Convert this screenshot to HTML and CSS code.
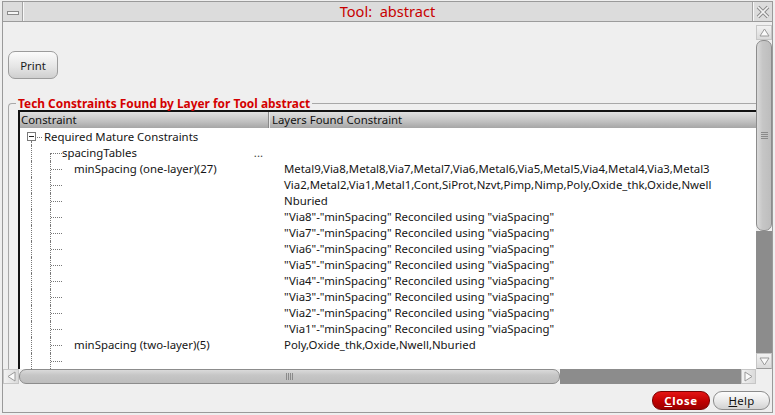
FILE: index.html
```html
<!DOCTYPE html>
<html>
<head>
<meta charset="utf-8">
<link rel="stylesheet" href="styles.css">
</head>
<body>
<div class="win">
  <div class="titlebar">
    <div class="tb-btn tb-min"><span class="minbar"></span></div>
    <div class="title">Tool:&nbsp; abstract</div>
    <div class="tb-btn tb-close">
      <svg width="14" height="14" viewBox="0 0 14 14"><path d="M2 2 L12 12 M12 2 L2 12" stroke="#8a8a8a" stroke-width="3.6" fill="none"/><path d="M2 2 L12 12 M12 2 L2 12" stroke="#f2f2f2" stroke-width="1.6" fill="none"/></svg>
    </div>
  </div>
  <div class="mid">
    <div class="view">
      <button class="print">Print</button>
      <div class="group">
        <div class="legend">Tech Constraints Found by Layer for Tool abstract</div>
        <div class="table">
          <div class="thead">
            <div class="th th1">Constraint</div>
            <div class="th th2">Layers Found Constraint</div>
          </div>
          <div class="tbody">
            <div class="row">
              <div class="c1"><span class="exp"><span class="box"></span><span class="exp-line"></span></span><span class="hd"></span><span class="lbl0">Required Mature Constraints</span></div>
              <div class="c2"></div>
            </div>
            <div class="row">
              <div class="c1"><span class="v1"></span><span class="conn half"><span class="t"></span><span class="b"></span></span><span class="lbl">spacingTables</span><span class="ell">...</span></div>
              <div class="c2"></div>
            </div>
            <div class="row">
              <div class="c1"><span class="v1"></span><span class="conn full"><span class="t"></span></span><span class="lbl l3">minSpacing (one-layer)(27)</span></div>
              <div class="c2">Metal9,Via8,Metal8,Via7,Metal7,Via6,Metal6,Via5,Metal5,Via4,Metal4,Via3,Metal3</div>
            </div>
            <div class="row">
              <div class="c1"><span class="v1"></span><span class="conn full"><span class="t"></span></span></div>
              <div class="c2">Via2,Metal2,Via1,Metal1,Cont,SiProt,Nzvt,Pimp,Nimp,Poly,Oxide_thk,Oxide,Nwell</div>
            </div>
            <div class="row">
              <div class="c1"><span class="v1"></span><span class="conn full"><span class="t"></span></span></div>
              <div class="c2">Nburied</div>
            </div>
            <div class="row">
              <div class="c1"><span class="v1"></span><span class="conn full"><span class="t"></span></span></div>
              <div class="c2">"Via8"-"minSpacing" Reconciled using "viaSpacing"</div>
            </div>
            <div class="row">
              <div class="c1"><span class="v1"></span><span class="conn full"><span class="t"></span></span></div>
              <div class="c2">"Via7"-"minSpacing" Reconciled using "viaSpacing"</div>
            </div>
            <div class="row">
              <div class="c1"><span class="v1"></span><span class="conn full"><span class="t"></span></span></div>
              <div class="c2">"Via6"-"minSpacing" Reconciled using "viaSpacing"</div>
            </div>
            <div class="row">
              <div class="c1"><span class="v1"></span><span class="conn full"><span class="t"></span></span></div>
              <div class="c2">"Via5"-"minSpacing" Reconciled using "viaSpacing"</div>
            </div>
            <div class="row">
              <div class="c1"><span class="v1"></span><span class="conn full"><span class="t"></span></span></div>
              <div class="c2">"Via4"-"minSpacing" Reconciled using "viaSpacing"</div>
            </div>
            <div class="row">
              <div class="c1"><span class="v1"></span><span class="conn full"><span class="t"></span></span></div>
              <div class="c2">"Via3"-"minSpacing" Reconciled using "viaSpacing"</div>
            </div>
            <div class="row">
              <div class="c1"><span class="v1"></span><span class="conn full"><span class="t"></span></span></div>
              <div class="c2">"Via2"-"minSpacing" Reconciled using "viaSpacing"</div>
            </div>
            <div class="row">
              <div class="c1"><span class="v1"></span><span class="conn full"><span class="t"></span></span></div>
              <div class="c2">"Via1"-"minSpacing" Reconciled using "viaSpacing"</div>
            </div>
            <div class="row">
              <div class="c1"><span class="v1"></span><span class="conn full"><span class="t"></span></span><span class="lbl l3">minSpacing (two-layer)(5)</span></div>
              <div class="c2">Poly,Oxide_thk,Oxide,Nwell,Nburied</div>
            </div>
            <div class="row">
              <div class="c1"><span class="v1"></span><span class="conn full"><span class="t"></span></span></div>
              <div class="c2"></div>
            </div>
          </div>
        </div>
      </div>
    </div>
    <div class="vscroll">
      <div class="arrow">
        <svg width="11" height="9" viewBox="0 0 11 9"><path d="M5.5 1 L10 8 L1 8 Z" fill="#fafafa" stroke="#9a9a9a" stroke-width="1"/></svg>
      </div>
      <div class="vthumb">
        <div class="grip-v"><i></i><i></i><i></i><i></i></div>
      </div>
      <div class="track"></div>
      <div class="arrow arrow-down">
        <svg width="11" height="9" viewBox="0 0 11 9"><path d="M5.5 8 L10 1 L1 1 Z" fill="#fafafa" stroke="#9a9a9a" stroke-width="1"/></svg>
      </div>
    </div>
  </div>
  <div class="hrow">
    <div class="hscroll">
      <div class="harrow">
        <svg width="9" height="11" viewBox="0 0 9 11"><path d="M1 5.5 L8 1 L8 10 Z" fill="#fafafa" stroke="#9a9a9a" stroke-width="1"/></svg>
      </div>
      <div class="hthumb">
        <div class="grip-h"><i></i><i></i><i></i><i></i></div>
      </div>
      <div class="track"></div>
      <div class="harrow">
        <svg width="9" height="11" viewBox="0 0 9 11"><path d="M8 5.5 L1 1 L1 10 Z" fill="#fafafa" stroke="#9a9a9a" stroke-width="1"/></svg>
      </div>
    </div>
    <div class="corner"></div>
  </div>
  <div class="footer">
    <button class="btn btn-close"><u>C</u>lose</button>
    <button class="btn btn-help"><u>H</u>elp</button>
  </div>
</div>
</body>
</html>
```

FILE: styles.css
```css
html, body {
  margin: 0;
  padding: 0;
}
body {
  background: #efefef;
  font-family: "Noto Sans", "DejaVu Sans", sans-serif;
  font-size: 11.4px;
  color: #151515;
  width: 775px;
  height: 415px;
  overflow: hidden;
}
.win {
  margin: 1px 2px 0 2px;
  border: 1px solid #9a9a9a;
  height: 410px;
  display: grid;
  grid-template-rows: 20px 347px 15px 28px;
  background: #efefef;
}

/* title bar */
.titlebar {
  display: flex;
  height: 19px;
  background: #dcdcdc;
  border-bottom: 1px solid #9c9c9c;
}
.tb-btn {
  width: 19px;
  display: flex;
  align-items: center;
  justify-content: center;
}
.tb-min {
  border-right: 1px solid #a4a4a4;
  box-shadow: 1px 0 0 #f8f8f8;
}
.minbar {
  display: block;
  width: 10px;
  height: 2px;
  margin-top: 3px;
  border: 1px solid #8a8a8a;
  background: #f6f6f6;
}
.tb-close {
  border-left: 1px solid #a4a4a4;
  box-shadow: inset 1px 0 0 #f8f8f8;
}
.title {
  flex: 1;
  text-align: center;
  color: #c80000;
  font-size: 14.6px;
  line-height: 19px;
}

/* middle */
.mid {
  display: grid;
  grid-template-columns: 753px 16px;
  overflow: hidden;
}
.view {
  overflow: hidden;
  padding: 29px 0 0 5px;
  box-sizing: border-box;
  height: 347px;
}
.print {
  display: block;
  width: 50px;
  height: 28px;
  margin: 0;
  padding: 0;
  border: 1px solid #9c9c9c;
  border-radius: 7px;
  background: linear-gradient(#fbfbfb, #e6e6e6 55%, #cfcfcf);
  font-family: inherit;
  font-size: 11.4px;
  color: #1a1a1a;
}
.group {
  margin-top: 24px;
  width: 900px;
  height: 400px;
  border-left: 1px solid #a8a8a8;
  border-top: 1px solid #a8a8a8;
  border-top-left-radius: 4px;
  padding-left: 9px;
  box-sizing: border-box;
}
.legend {
  width: max-content;
  margin: -8px 0 0 -2px;
  padding: 0 2px;
  height: 14px;
  line-height: 14px;
  background: #efefef;
  color: #d40000;
  font-weight: bold;
  font-size: 11.9px;
}
.table {
  border-left: 2px solid #111;
  border-top: 2px solid #111;
  background: #fff;
  height: 400px;
}
.thead {
  display: flex;
  height: 16px;
  line-height: 16px;
  background: linear-gradient(#e0e0e0, #c0c0c0 60%, #a6a6a6);
  color: #111;
}
.th1 {
  width: 247px;
  padding-left: 1px;
  border-right: 1px solid #888;
  box-shadow: 1px 0 0 #e8e8e8;
}
.th2 {
  padding-left: 3px;
}
.tbody {
  padding-top: 1px;
}
.row {
  display: grid;
  grid-template-columns: 248px auto;
  height: 16px;
  line-height: 16px;
  white-space: nowrap;
}
.c1 {
  display: flex;
  height: 16px;
}
.c2 {
  padding-left: 16px;
}
.exp {
  width: 9px;
  margin-left: 7px;
  display: flex;
  flex-direction: column;
  align-items: center;
}
.box {
  width: 9px;
  height: 9px;
  box-sizing: border-box;
  border: 1px solid #7a7a7a;
  margin-top: 3px;
  background: #fff;
  flex: none;
}
.box::after {
  content: "";
  display: block;
  height: 1px;
  margin: 3px 1px 0;
  background: #222;
}
.exp-line {
  flex: 1;
  width: 0;
  border-left: 1px dotted #777;
}
.hd {
  width: 5px;
  margin-left: 1px;
  height: 8px;
  border-bottom: 1px dotted #777;
}
.lbl0 {
  margin-left: 2px;
}
.v1 {
  width: 19px;
  margin-left: 11px;
  border-left: 1px dotted #777;
  box-sizing: border-box;
  flex: none;
}
.conn {
  width: 12px;
  display: flex;
  flex-direction: column;
  box-sizing: border-box;
  flex: none;
}
.conn.full {
  border-left: 1px dotted #777;
}
.conn .t {
  height: 9px;
  border-bottom: 1px dotted #777;
  box-sizing: border-box;
}
.conn .b {
  flex: 1;
  border-left: 1px dotted #777;
}
.lbl.l3 {
  padding-left: 12px;
}
.ell {
  margin-left: auto;
  margin-right: 5px;
  color: #444;
}

/* scrollbars */
.vscroll {
  display: flex;
  flex-direction: column;
  padding-top: 3px;
  box-sizing: border-box;
  height: 347px;
}
.arrow {
  height: 15px;
  flex: none;
  box-sizing: border-box;
  background: linear-gradient(#f2f2f2, #dadada);
  border: 1px solid #c6c6c6;
  display: flex;
  align-items: center;
  justify-content: center;
}
.arrow-down {
  height: 16px;
  border-bottom: 1px solid #9a9a9a;
}
.vthumb {
  height: 191px;
  flex: none;
  box-sizing: border-box;
  border: 1px solid #8c8c8c;
  border-radius: 7px;
  background: linear-gradient(90deg, #dadada, #c6c6c6 40%, #bdbdbd);
  display: flex;
  align-items: center;
  justify-content: center;
}
.grip-v {
  display: flex;
  flex-direction: column;
  gap: 1px;
}
.grip-v i {
  display: block;
  width: 7px;
  height: 1px;
  background: #8a8a8a;
}
.track {
  flex: 1;
  background: #8c8c8c;
}
.hrow {
  display: grid;
  grid-template-columns: 753px 16px;
}
.hscroll {
  display: flex;
  height: 15px;
}
.harrow {
  width: 15px;
  flex: none;
  box-sizing: border-box;
  background: linear-gradient(90deg, #f2f2f2, #dadada);
  border: 1px solid #c6c6c6;
  display: flex;
  align-items: center;
  justify-content: center;
}
.harrow:first-child {
  width: 16px;
}
.hthumb {
  width: 541px;
  flex: none;
  box-sizing: border-box;
  border: 1px solid #8c8c8c;
  border-radius: 7px;
  background: linear-gradient(#dadada, #c6c6c6 40%, #bdbdbd);
  display: flex;
  align-items: center;
  justify-content: center;
}
.grip-h {
  display: flex;
  gap: 1px;
}
.grip-h i {
  display: block;
  width: 1px;
  height: 7px;
  background: #8a8a8a;
}
.corner {
  background: #efefef;
}

/* footer */
.footer {
  display: flex;
  justify-content: flex-end;
  align-items: flex-start;
  gap: 3px;
  padding: 7px 2px 0 0;
}
.btn {
  height: 19px;
  margin: 0;
  padding: 0;
  border-radius: 9px;
  font-family: inherit;
  font-size: 11.4px;
  line-height: 17px;
}
.btn-close {
  width: 58px;
  border: 1px solid #7a0000;
  background: linear-gradient(#e41414, #c00000 55%, #9c0000);
  color: #fff;
  font-weight: bold;
  letter-spacing: 0.6px;
}
.btn-help {
  width: 57px;
  border: 1px solid #8c8c8c;
  background: linear-gradient(#fcfcfc, #e8e8e8 55%, #d2d2d2);
  color: #111;
  letter-spacing: 0.3px;
}
```
